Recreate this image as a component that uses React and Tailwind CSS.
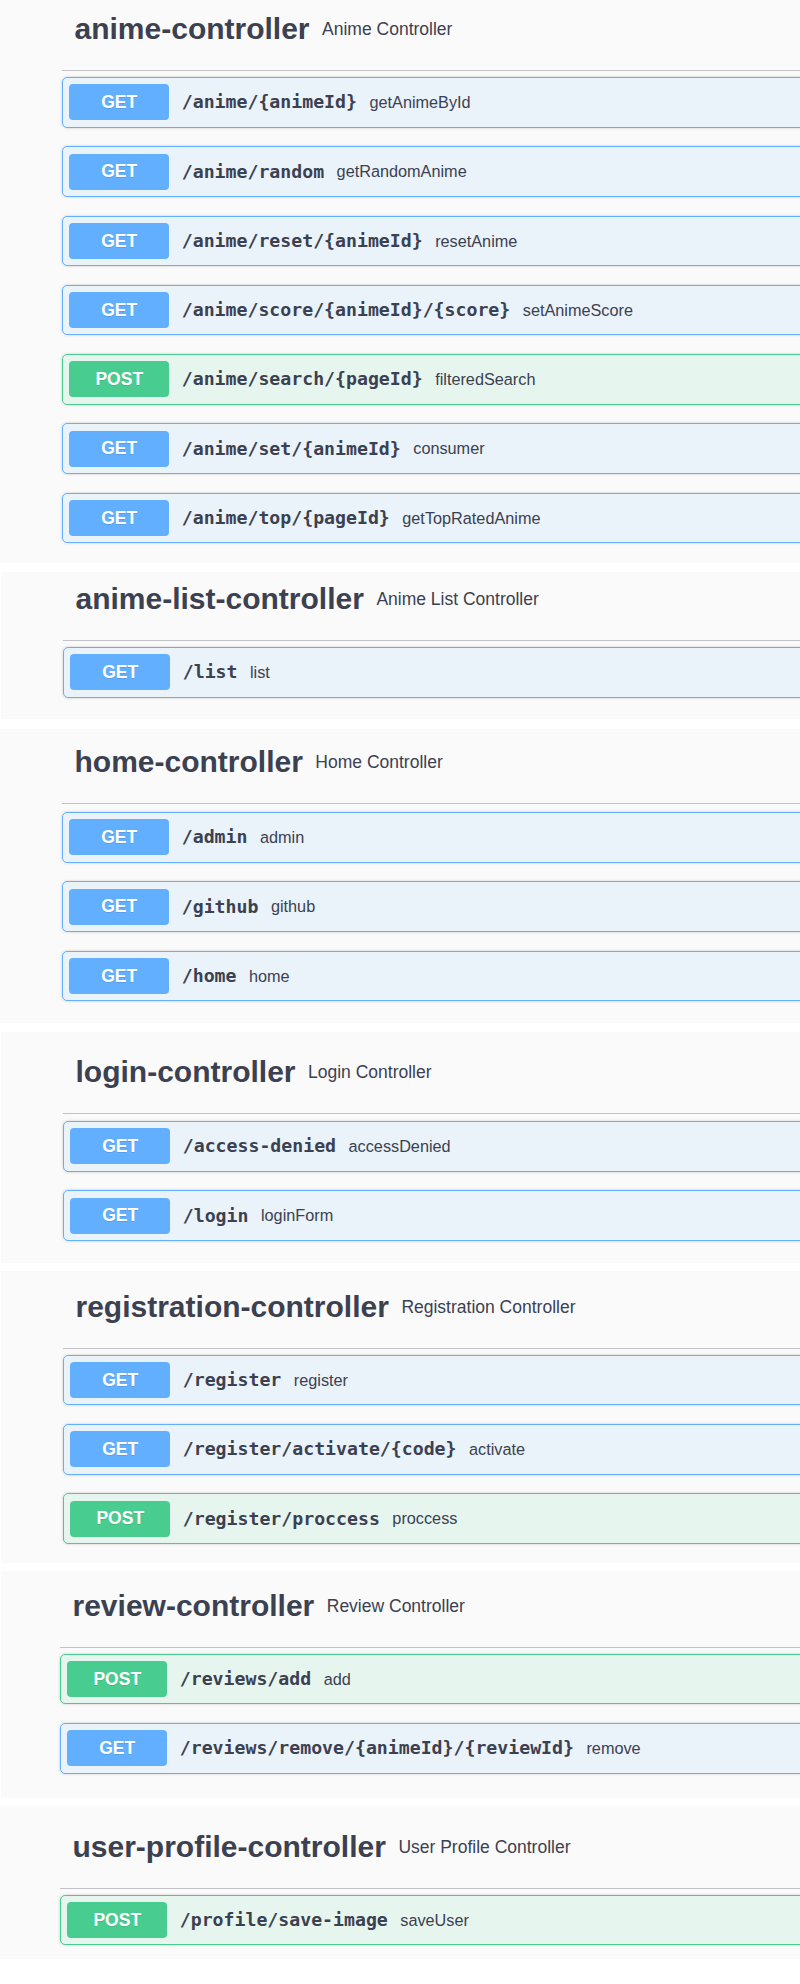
const sections = [
  {
    name: "anime-controller",
    desc: "Anime Controller",
    panel: "ml-0 pl-[62px] pb-[20px] mb-[9px]",
    head: "pt-[12px]",
    list: "mt-[6px]",
    ops: [
      ["GET", "/anime/{animeId}", "getAnimeById"],
      ["GET", "/anime/random", "getRandomAnime"],
      ["GET", "/anime/reset/{animeId}", "resetAnime"],
      ["GET", "/anime/score/{animeId}/{score}", "setAnimeScore"],
      ["POST", "/anime/search/{pageId}", "filteredSearch"],
      ["GET", "/anime/set/{animeId}", "consumer"],
      ["GET", "/anime/top/{pageId}", "getTopRatedAnime"],
    ],
  },
  {
    name: "anime-list-controller",
    desc: "Anime List Controller",
    panel: "ml-[1px] pl-[62px] pb-[21.5px] mb-[10px]",
    head: "pt-[10px]",
    list: "mt-[6px]",
    ops: [["GET", "/list", "list"]],
  },
  {
    name: "home-controller",
    desc: "Home Controller",
    panel: "ml-0 pl-[62px] pb-[22px] mb-[9px]",
    head: "pt-[16px]",
    list: "mt-[8px]",
    ops: [
      ["GET", "/admin", "admin"],
      ["GET", "/github", "github"],
      ["GET", "/home", "home"],
    ],
  },
  {
    name: "login-controller",
    desc: "Login Controller",
    panel: "ml-[1px] pl-[62px] pb-[22px] mb-[8px]",
    head: "pt-[23px]",
    list: "mt-[7px]",
    ops: [
      ["GET", "/access-denied", "accessDenied"],
      ["GET", "/login", "loginForm"],
    ],
  },
  {
    name: "registration-controller",
    desc: "Registration Controller",
    panel: "ml-[1px] pl-[62px] pb-[19px] mb-[8px]",
    head: "pt-[19px]",
    list: "mt-[6px]",
    ops: [
      ["GET", "/register", "register"],
      ["GET", "/register/activate/{code}", "activate"],
      ["POST", "/register/proccess", "proccess"],
    ],
  },
  {
    name: "review-controller",
    desc: "Review Controller",
    panel: "ml-[1px] pl-[59px] pb-[24px] mb-[8px]",
    head: "pt-[18px]",
    list: "mt-[6px]",
    ops: [
      ["POST", "/reviews/add", "add"],
      ["GET", "/reviews/remove/{animeId}/{reviewId}", "remove"],
    ],
  },
  {
    name: "user-profile-controller",
    desc: "User Profile Controller",
    panel: "ml-0 pl-[60px] pb-[13.5px] mb-0",
    head: "pt-[24px]",
    list: "mt-[6px]",
    ops: [["POST", "/profile/save-image", "saveUser"]],
  },
];

const Operation = ({ method, path, summary }) => {
  const isGet = method === "GET";
  return (
    <div
      className={`flex items-center border rounded-[5px] py-[6.25px] pl-[6.25px] mb-[18.75px] last:mb-0 shadow-[0_0_3px_rgba(0,0,0,0.19)] ${
        isGet ? "border-[#61affe] bg-[#61affe]/10" : "border-[#49cc90] bg-[#49cc90]/10"
      }`}
    >
      <div
        className={`w-[100px] h-[36px] shrink-0 rounded-[4px] flex items-center justify-center text-white font-bold text-[17.5px] font-['Liberation_Sans',Arial,sans-serif] [text-shadow:0_1px_0_rgba(0,0,0,0.1)] ${
          isGet ? "bg-[#61affe]" : "bg-[#49cc90]"
        }`}
      >
        {method}
      </div>
      <span className="ml-[12.5px] font-bold text-[18.2px] leading-[24px] text-[#3b4151] font-['DejaVu_Sans_Mono',monospace]">
        {path}
      </span>
      <span className="ml-[12.5px] text-[16.25px] text-[#3b4151] font-['Liberation_Sans',Arial,sans-serif]">
        {summary}
      </span>
    </div>
  );
};

const Section = ({ section }) => (
  <div className={`bg-[#fafafa] overflow-hidden ${section.panel}`}>
    <div className="w-[900px]">
      <div
        className={`flex items-center pl-[12.5px] pb-[24px] border-b border-[rgba(59,65,81,0.3)] text-[#3b4151] font-['Liberation_Sans',Arial,sans-serif] ${section.head}`}
      >
        <span className="font-bold text-[30px] leading-[34px]">{section.name}</span>
        <span className="ml-[12.5px] text-[17.5px] leading-[20px]">{section.desc}</span>
      </div>
      <div className={section.list}>
        {section.ops.map(([method, path, summary]) => (
          <Operation key={method + path} method={method} path={path} summary={summary} />
        ))}
      </div>
    </div>
  </div>
);

export default function App() {
  return (
    <div className="w-[800px] h-[1984px] bg-white overflow-hidden">
      {sections.map((s) => (
        <Section key={s.name} section={s} />
      ))}
    </div>
  );
}
